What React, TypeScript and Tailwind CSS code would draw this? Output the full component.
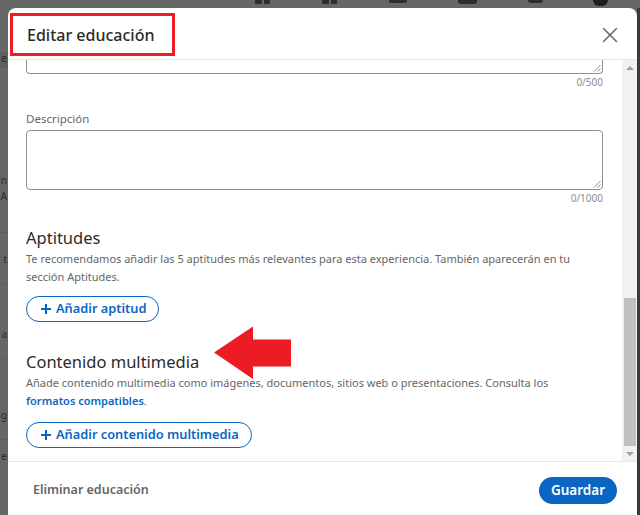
import React from 'react';

const CloseIcon = () => (
  <svg width="16" height="16" viewBox="0 0 16 16" fill="none" stroke="#666666" strokeWidth="1.5" strokeLinecap="round">
    <path d="M1.5 1.5 L14.5 14.5 M14.5 1.5 L1.5 14.5" />
  </svg>
);

const PlusIcon = () => (
  <svg width="10" height="10" viewBox="0 0 10 10" fill="currentColor">
    <rect x="4" y="0" width="2" height="10" />
    <rect x="0" y="4" width="10" height="2" />
  </svg>
);

const ResizeHandle = () => (
  <svg className="absolute right-[1px] bottom-[1px]" width="8" height="8" viewBox="0 0 8 8" stroke="#8c8c8c" strokeWidth="1">
    <path d="M7.5 1 L1 7.5 M7.5 4.5 L4.5 7.5" />
  </svg>
);

const OutlineButton = ({ label, className = '' }: { label: string; className?: string }) => (
  <button
    className={`self-start h-[26px] flex items-center gap-[5px] pl-[14px] pr-[12px] rounded-full border border-[#0a66c2] text-[#0a66c2] text-[12.8px] font-semibold ${className}`}
  >
    <PlusIcon />
    <span>{label}</span>
  </button>
);

const Counter = ({ text }: { text: string }) => (
  <p className="text-right text-[10px] leading-[16px] text-[#8c8c8c]">{text}</p>
);

const Scrollbar = () => (
  <div className="w-[15px] shrink-0 bg-[#f1f1f1] flex flex-col">
    <div className="h-[15px] flex items-center justify-center">
      <div className="w-0 h-0 border-x-[4px] border-x-transparent border-b-[4px] border-b-[#a3a3a3]" />
    </div>
    <div className="flex-1" />
    <div className="h-[148px] ml-[2px] mr-[1px] bg-[#c1c1c1]" />
    <div className="h-[15px] flex items-center justify-center">
      <div className="w-0 h-0 border-x-[4px] border-x-transparent border-t-[4px] border-t-[#a3a3a3]" />
    </div>
  </div>
);

const TopBits = () => (
  <div className="h-[8px] flex items-start">
    <div className="ml-[255px] w-[15px] h-[4px] flex gap-[2px]">
      <div className="flex-1 bg-[#2e2e2e]" />
      <div className="flex-1 bg-[#2e2e2e]" />
    </div>
    <div className="ml-[52px] w-[15px] h-[4px] flex gap-[2px]">
      <div className="flex-1 bg-[#2e2e2e]" />
      <div className="flex-1 bg-[#2e2e2e]" />
    </div>
    <div className="ml-[52px] w-[18px] h-[3px] rounded-b-[2px] bg-[#2e2e2e]" />
    <div className="ml-[51px] w-[19px] h-[4px] rounded-b-[3px] bg-[#2e2e2e]" />
    <div className="ml-[51px] w-[15px] h-[3px] rounded-b-[3px] bg-[#2e2e2e]" />
    <div className="ml-[50px] w-[15px] h-[6px] rounded-b-full bg-[#1c1c1c]" />
  </div>
);

// slivers of the page that peek out to the left of the dialog
const LeftBits = () => (
  <div className="w-[8px] shrink-0 overflow-hidden flex flex-col items-end text-[10px] leading-[12px] text-[#2a2a2a]">
    <div className="mt-[44px] w-full h-[16px] bg-[#5f5f5f] flex justify-end pr-[1px]"><span>e</span></div>
    <div className="mt-[106px] pr-[1px]">n</div>
    <div className="mt-[4px] pr-[1px]">A</div>
    <div className="mt-[30px] w-full h-px bg-[#5c5c5c]" />
    <div className="mt-[20px] pr-[1px]">t</div>
    <div className="mt-[18px] w-full h-px bg-[#5c5c5c]" />
    <div className="mt-[44px] pr-[1px]">a</div>
    <div className="mt-[18px] w-full h-px bg-[#5c5c5c]" />
    <div className="mt-[50px] pr-[1px]">g</div>
    <div className="mt-[18px] w-full h-px bg-[#5c5c5c]" />
    <div className="mt-[10px] pr-[1px]">e</div>
  </div>
);

const Modal = () => (
  <div className="w-[629px] h-[511px] shrink-0 bg-white rounded-t-[8px] flex flex-col overflow-hidden">
    <header className="h-[52px] shrink-0 border-b border-[#e8e8e8] flex items-center justify-between pl-[19px] pr-[19px] pt-[2px]">
      <h2 className="text-[16px] font-medium text-[#2b2b2b]">Editar educación</h2>
      <CloseIcon />
    </header>

    <div className="h-[401px] shrink-0 flex">
      <div className="flex-1 min-w-0 pl-[18px] pr-[19px] flex flex-col overflow-hidden">
        <div className="relative h-[14px] shrink-0 border-x border-b border-[#8f8f8f] rounded-b-[4px]">
          <ResizeHandle />
        </div>
        <Counter text="0/500" />

        <label className="mt-[20px] text-[11.5px] leading-[18px] text-[#666666]">Descripción</label>
        <div className="relative mt-[2px] h-[60px] shrink-0 border border-[#8f8f8f] rounded-[4px]">
          <ResizeHandle />
        </div>
        <Counter text="0/1000" />

        <h3 className="mt-[20px] text-[16.5px] leading-[24px] text-[#2b2b2b]">Aptitudes</h3>
        <p className="text-[11px] leading-[18px] text-[#666666] whitespace-nowrap">
          Te recomendamos añadir las 5 aptitudes más relevantes para esta experiencia. También aparecerán en tu
          <br />
          sección Aptitudes.
        </p>
        <OutlineButton label="Añadir aptitud" className="mt-[10px]" />

        <h3 className="mt-[28px] text-[16.5px] leading-[24px] text-[#2b2b2b]">Contenido multimedia</h3>
        <p className="text-[11px] leading-[18px] text-[#666666] whitespace-nowrap">
          Añade contenido multimedia como imágenes, documentos, sitios web o presentaciones. Consulta los
          <br />
          <a className="font-semibold text-[#0a66c2]">formatos compatibles</a>.
        </p>
        <OutlineButton label="Añadir contenido multimedia" className="mt-[12px]" />
      </div>
      <Scrollbar />
    </div>

    <footer className="flex-1 border-t border-[#e8e8e8] flex items-center justify-between pl-[25px] pr-[20px]">
      <button className="text-[12.5px] font-semibold text-[#666666]">Eliminar educación</button>
      <button className="h-[27px] px-[12px] rounded-full bg-[#0a66c2] text-white text-[13.5px] font-semibold">
        Guardar
      </button>
    </footer>
  </div>
);

export default function App() {
  return (
    <div className="relative w-[640px] h-[515px] overflow-hidden bg-[#666666] font-['Noto_Sans',sans-serif]">
      <TopBits />
      <div className="flex">
        <LeftBits />
        <Modal />
        <div className="w-[3px] h-[511px] bg-[#3a3a3a]" />
      </div>

      {/* red annotations drawn on top of the screenshot */}
      <div className="absolute left-[10px] top-[13px] w-[165px] h-[43px] border-[3px] border-[#ed1c24]" />
      <svg className="absolute left-[212px] top-[325px]" width="80" height="56" viewBox="0 0 80 56">
        <polygon points="2,27.5 41,1.5 41,14.5 79,14.5 79,41.5 41,41.5 41,54" fill="#ed1c24" />
      </svg>
    </div>
  );
}
